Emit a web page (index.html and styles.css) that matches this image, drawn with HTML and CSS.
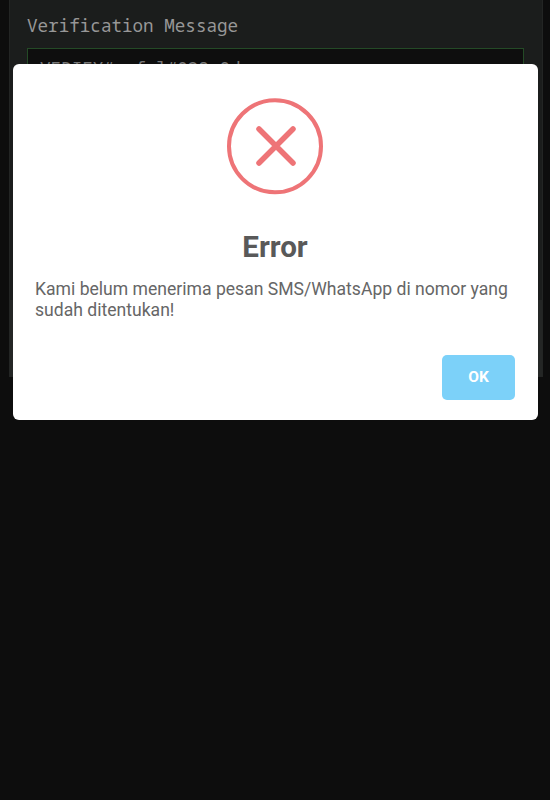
FILE: index.html
```html
<!DOCTYPE html>
<html lang="id">
<head>
    <meta charset="UTF-8">
    <meta name="viewport" content="width=device-width, initial-scale=1.0">
    <title>Verification</title>
    <link rel="stylesheet" href="styles.css">
</head>
<body>
    <div class="card">
        <div class="card-body">
            <label class="label" for="message">Verification Message</label>
            <input class="message" id="message" type="text" value="VERIFY#sxfol#028s0d" readonly>
        </div>
        <div class="card-footer"></div>
    </div>

    <div class="overlay">
        <div class="modal" role="dialog">
            <svg class="icon" viewBox="0 0 96 96">
                <circle cx="48" cy="48.3" r="46"/>
                <path class="cross" d="M32 31L66 65M66 31L32 65"/>
            </svg>
            <h2 class="title">Error</h2>
            <p class="text">Kami belum menerima pesan SMS/WhatsApp di nomor yang sudah ditentukan!</p>
            <div class="footer">
                <button class="ok">OK</button>
            </div>
        </div>
    </div>
</body>
</html>
```

FILE: styles.css
```css
* {
    box-sizing: border-box;
}

body {
    margin: 0;
    height: 800px;
    overflow: hidden;
    background-color: #0d0d0d;
    font-family: Roboto, sans-serif;
}

.card {
    height: 377px;
    margin: 0 7px 0 9px;
    border: 1px solid #232524;
    border-top: none;
    background-color: #1b1d1c;
}

.card-body {
    height: 300px;
    padding: 13px 17px;
}

.card-footer {
    height: 76px;
    background-color: #242625;
}

.label {
    display: block;
    height: 35px;
    color: #979797;
    font-family: "Noto Sans Mono", "Droid Sans Mono", "DejaVu Sans Mono", monospace;
    font-size: 17.6px;
    line-height: 24px;
}

.message {
    display: block;
    width: 497px;
    height: 43px;
    padding: 0 12px 3px;
    border: 1px solid #244a26;
    background-color: #0e0e0e;
    color: #777;
    font-family: "Noto Sans Mono", "Droid Sans Mono", "DejaVu Sans Mono", monospace;
    font-size: 17.6px;
}

.overlay {
    position: absolute;
    top: 0;
    left: 0;
    width: 100%;
    padding: 63.5px 12px 0 13px;
}

.modal {
    height: 356px;
    padding: 34.5px 23px 0 22px;
    border-radius: 6px;
    background-color: #fff;
}

.icon {
    display: block;
    width: 96px;
    height: 96px;
    margin: 0 auto;
    overflow: visible;
    fill: none;
    stroke: #ee7477;
    stroke-width: 4;
}

.cross {
    stroke-width: 5.5;
    stroke-linecap: round;
}

.title {
    margin: 34px 0 0;
    color: #595959;
    font-size: 29.6px;
    line-height: 38px;
    text-align: center;
}

.text {
    margin: 13px 0 0;
    color: #666;
    font-size: 17.58px;
    line-height: 20.5px;
}

.footer {
    display: flex;
    justify-content: flex-end;
    margin-top: 34.5px;
}

.ok {
    width: 73px;
    height: 45px;
    border: none;
    border-radius: 5px;
    background-color: #7cd1f9;
    color: #fff;
    font-family: Roboto, sans-serif;
    font-size: 15.5px;
    font-weight: bold;
}
```
